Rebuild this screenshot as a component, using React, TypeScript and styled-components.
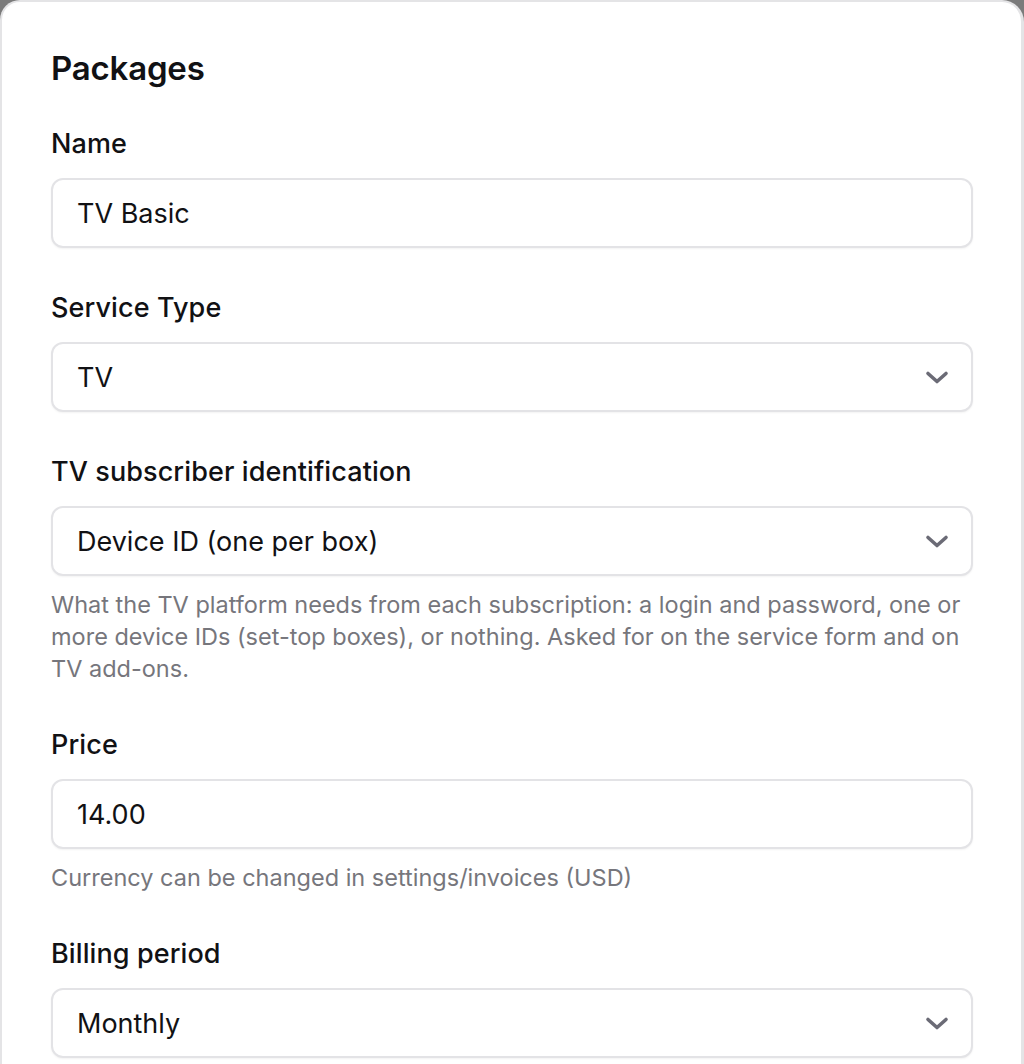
import styled, { createGlobalStyle } from 'styled-components'

const GlobalStyle = createGlobalStyle`
  html, body {
    margin: 0;
    padding: 0;
    background: #7b7b7b;
  }
  body {
    font-family: Inter, "Noto Sans", "Liberation Sans", sans-serif;
    color: #111114;
  }
`

const Card = styled.div`
  box-sizing: border-box;
  width: 1024px;
  min-height: 1064px;
  background: #ffffff;
  border: 2px solid #e4e4e6;
  border-right-width: 3px;
  border-bottom: none;
  border-radius: 20px 22px 0 0;
  padding: 46px 48px 0 49px;
`

const Title = styled.h1`
  margin: 0 0 40px;
  font-size: 33px;
  line-height: 40px;
  font-weight: 600;
  letter-spacing: -0.2px;
`

const Form = styled.div`
  display: flex;
  flex-direction: column;
  gap: 44px;
`

const Field = styled.div`
  display: flex;
  flex-direction: column;
`

const Label = styled.label`
  font-size: 27px;
  line-height: 32px;
  font-weight: 500;
  margin-bottom: 18px;
  letter-spacing: 0.1px;
`

const Control = styled.div`
  box-sizing: border-box;
  height: 70px;
  border: 2px solid #e3e3e6;
  border-radius: 12px;
  background: #fff;
  box-shadow: 0 1px 2px rgba(0, 0, 0, 0.05);
  display: flex;
  align-items: center;
  padding: 0 22px 0 24px;
  font-size: 27px;
`

const Value = styled.span`
  flex: 1;
`

const Chevron = styled.svg`
  width: 24px;
  height: 24px;
  color: #6b6b76;
`

const Help = styled.p`
  margin: 13px 0 0;
  font-size: 23.5px;
  line-height: 32px;
  color: #76767c;
`

const ChevronIcon = () => (
  <Chevron viewBox="0 0 24 24" fill="none">
    <path d="M3 8.5 L12 16.5 L21 8.5" stroke="currentColor" strokeWidth="3.6" strokeLinecap="round" strokeLinejoin="round" />
  </Chevron>
)

interface FieldProps {
  label: string
  value: string
  select?: boolean
  help?: string
}

const FormField = ({ label, value, select, help }: FieldProps) => (
  <Field>
    <Label>{label}</Label>
    <Control>
      <Value>{value}</Value>
      {select && <ChevronIcon />}
    </Control>
    {help && <Help>{help}</Help>}
  </Field>
)

export default function App() {
  return (
    <>
      <GlobalStyle />
      <Card>
        <Title>Packages</Title>
        <Form>
          <FormField label="Name" value="TV Basic" />
          <FormField label="Service Type" value="TV" select />
          <FormField
            label="TV subscriber identification"
            value="Device ID (one per box)"
            select
            help="What the TV platform needs from each subscription: a login and password, one or more device IDs (set-top boxes), or nothing. Asked for on the service form and on TV add-ons."
          />
          <FormField
            label="Price"
            value="14.00"
            help="Currency can be changed in settings/invoices (USD)"
          />
          <FormField label="Billing period" value="Monthly" select />
        </Form>
      </Card>
    </>
  )
}
